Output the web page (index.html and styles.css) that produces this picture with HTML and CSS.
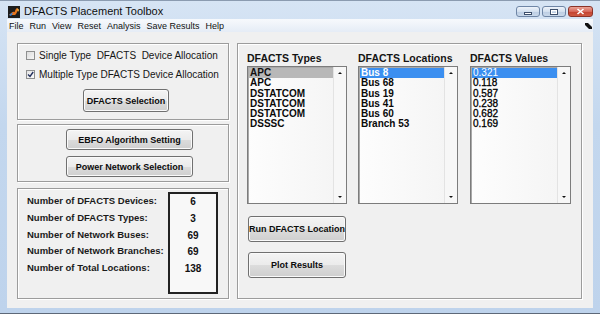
FILE: index.html
```html
<!DOCTYPE html>
<html lang="en">
<head>
    <meta charset="UTF-8">
    <meta name="viewport" content="width=device-width, initial-scale=1.0">
    <title>DFACTS Placement Toolbox</title>
    <link rel="stylesheet" href="styles.css">
</head>
<body>
    <div class="window">
        <div class="titlebar">
            <svg class="app-icon" width="12" height="12" viewBox="0 0 12 12">
                <rect width="12" height="12" fill="#1c1c1c"/>
                <path d="M1 9 C3 8 4 5 6 6 C7 7 7 3 9 2 L11 4 C9 4 9 8 7 9 Z" fill="#e8741c"/>
                <path d="M1 9 C3 8 4 6 5 7 L3 10 Z" fill="#3a7fd0"/>
                <path d="M9 2 L11 4 L10 6 Z" fill="#f4c040"/>
            </svg>
            <span class="title">DFACTS Placement Toolbox</span>
            <div class="win-buttons">
                <span class="wbtn min"><i></i></span>
                <span class="wbtn max"><i></i></span>
                <span class="wbtn close">
                    <svg width="9" height="7" viewBox="0 0 9 7">
                        <path d="M1.5 1 L7.5 6 M7.5 1 L1.5 6" stroke="#fff" stroke-width="1.6"/>
                    </svg>
                </span>
            </div>
        </div>

        <div class="menubar">
            <span>File</span>
            <span>Run</span>
            <span>View</span>
            <span>Reset</span>
            <span>Analysis</span>
            <span>Save Results</span>
            <span>Help</span>
            <svg class="dock" width="7" height="6" viewBox="0 0 7 6">
                <path d="M0 0 L3 0 L7 4 L7 6 L4 6 L0 2 Z" fill="#111"/>
            </svg>
        </div>

        <div class="content">
            <div class="left-col">
                <div class="panel alloc">
                    <label class="check"><span class="box"></span>Single Type&nbsp; DFACTS&nbsp; Device Allocation</label>
                    <label class="check"><span class="box checked">
                        <svg width="7" height="7" viewBox="0 0 7 7"><path d="M1 3.5 L3 5.5 L6.2 1" stroke="#24315e" stroke-width="1.4" fill="none"/></svg>
                    </span>Multiple Type DFACTS Device Allocation</label>
                    <button class="btn btn-select">DFACTS Selection</button>
                </div>

                <div class="panel setup">
                    <button class="btn btn-setup">EBFO Algorithm Setting</button>
                    <button class="btn btn-setup">Power Network Selection</button>
                </div>

                <div class="panel stats">
                    <div class="stat-labels">
                        <div>Number of DFACTS Devices:</div>
                        <div>Number of DFACTS Types:</div>
                        <div>Number of Network Buses:</div>
                        <div>Number of Network Branches:</div>
                        <div>Number of Total Locations:</div>
                    </div>
                    <div class="stat-values">
                        <div>6</div>
                        <div>3</div>
                        <div>69</div>
                        <div>69</div>
                        <div>138</div>
                    </div>
                </div>
            </div>

            <div class="panel main">
                <div class="lists">
                    <div class="list-col">
                        <div class="list-title">DFACTS Types</div>
                        <div class="listbox types">
                            <ul>
                                <li class="sel inactive">APC</li>
                                <li>APC</li>
                                <li>DSTATCOM</li>
                                <li>DSTATCOM</li>
                                <li>DSTATCOM</li>
                                <li>DSSSC</li>
                            </ul>
                            <div class="scroll"><span class="up"></span><span class="down"></span></div>
                        </div>
                    </div>
                    <div class="list-col">
                        <div class="list-title">DFACTS Locations</div>
                        <div class="listbox locations">
                            <ul>
                                <li class="sel">Bus 8</li>
                                <li>Bus 68</li>
                                <li>Bus 19</li>
                                <li>Bus 41</li>
                                <li>Bus 60</li>
                                <li>Branch 53</li>
                            </ul>
                            <div class="scroll"><span class="up"></span><span class="down"></span></div>
                        </div>
                    </div>
                    <div class="list-col">
                        <div class="list-title">DFACTS Values</div>
                        <div class="listbox values">
                            <ul>
                                <li class="sel">0.321</li>
                                <li>0.118</li>
                                <li>0.587</li>
                                <li>0.238</li>
                                <li>0.682</li>
                                <li>0.169</li>
                            </ul>
                            <div class="scroll"><span class="up"></span><span class="down"></span></div>
                        </div>
                    </div>
                </div>

                <div class="actions">
                    <button class="btn btn-action">Run DFACTS Location</button>
                    <button class="btn btn-action">Plot Results</button>
                </div>
            </div>
        </div>
    </div>
</body>
</html>
```

FILE: styles.css
```css
* {
    box-sizing: border-box;
}

body {
    margin: 0;
    font-family: "Liberation Sans", Arial, sans-serif;
    color: #111;
    background: #c6d9f0;
}

.window {
    width: 600px;
    height: 314px;
    display: flex;
    flex-direction: column;
    padding: 0 7px 5px 7px;
    background: linear-gradient(to bottom, #d6e4f4, #c3d7ee 40%, #bed3ec);
    border-top: 1px solid #8b9bb0;
    border-bottom: 1px solid #5d6878;
}

/* title bar */
.titlebar {
    height: 18px;
    display: flex;
    align-items: flex-start;
    padding-top: 4px;
}

.app-icon {
    margin-left: 1px;
    margin-top: 1px;
}

.title {
    margin-left: 4px;
    font-size: 11px;
    line-height: 13px;
    color: #101010;
}

.win-buttons {
    margin-left: auto;
    display: flex;
    gap: 2px;
    margin-top: 1px;
}

.wbtn {
    width: 24px;
    height: 11px;
    border: 1px solid #6f86a6;
    border-radius: 3px;
    background: linear-gradient(to bottom, #eef3fa, #d3e0ef 50%, #bccde3 51%, #c9d8ea);
    display: flex;
    align-items: center;
    justify-content: center;
}

.wbtn.min i {
    width: 8px;
    height: 3px;
    margin-top: 3px;
    background: #fff;
    border: 1px solid #3d4f6b;
}

.wbtn.max i {
    width: 8px;
    height: 6px;
    border: 1px solid #3d4f6b;
    box-shadow: inset 0 0 0 1px #fff;
}

.wbtn.close {
    width: 25px;
    border-color: #8b3328;
    background: linear-gradient(to bottom, #eaa396, #d6685a 50%, #c2402f 51%, #cf5a42);
}

/* menu */
.menubar {
    height: 13px;
    display: flex;
    align-items: center;
    gap: 6px;
    padding-left: 2px;
    background: linear-gradient(to bottom, #f7f9fc, #e5ecf6);
    font-size: 9px;
    color: #111;
}

.menubar .dock {
    margin-left: auto;
    margin-right: 1px;
}

/* content */
.content {
    flex: 1;
    display: flex;
    gap: 8px;
    padding: 11px 11px 9px 10px;
    background: #f0f0f0;
}

.left-col {
    width: 212px;
    display: flex;
    flex-direction: column;
}

.panel {
    border: 1px solid #9c9c9c;
    box-shadow: inset 1px 1px 0 #fff, 1px 1px 0 #fff;
    background: #f0f0f0;
}

.alloc {
    height: 77px;
    padding: 4px 0 0 8px;
}

.setup {
    height: 58px;
    margin-top: 4px;
    padding: 4px 0 0 48px;
}

.stats {
    height: 111px;
    margin-top: 6px;
    display: flex;
    padding-left: 9px;
}

/* checkboxes */
.check {
    display: flex;
    align-items: center;
    height: 14px;
    font-size: 10px;
    color: #151515;
    white-space: nowrap;
}

.check + .check {
    margin-top: 5px;
}

.box {
    width: 9px;
    height: 9px;
    margin-right: 4px;
    border: 1px solid #8e8f8f;
    background: linear-gradient(135deg, #dcdcdc, #f6f6f6);
    display: flex;
    align-items: center;
    justify-content: center;
}

.box.checked {
    background: linear-gradient(135deg, #e4e4e4, #fbfbfb);
}

/* buttons */
.btn {
    display: block;
    padding: 0;
    font-family: "Liberation Sans", Arial, sans-serif;
    font-size: 9px;
    font-weight: bold;
    color: #0c0c0c;
    border: 1px solid #707070;
    border-radius: 3px;
    background: linear-gradient(to bottom, #f4f4f4, #ebebeb 50%, #dcdcdc 51%, #cfcfcf);
    box-shadow: inset 0 0 0 1px #fafafa;
    white-space: nowrap;
}

.btn-select {
    width: 86px;
    height: 23px;
    margin: 8px 0 0 57px;
}

.btn-setup {
    width: 127px;
    height: 21px;
}

.btn-setup + .btn-setup {
    margin-top: 6px;
}

/* stats */
.stat-labels {
    width: 141px;
    padding-top: 4px;
    font-size: 9.5px;
    font-weight: bold;
    line-height: 16.75px;
    color: #1a1a1a;
}

.stat-values {
    width: 50px;
    height: 102px;
    margin-top: 3px;
    border: 2px solid #222;
    background: #f8f8f8;
    text-align: center;
    font-size: 10px;
    font-weight: bold;
    line-height: 16.75px;
}

/* main panel */
.main {
    width: 345px;
    padding: 8px 0 0 9px;
}

.lists {
    display: flex;
    gap: 11px;
}

.list-col {
    width: 100px;
}

.list-col:last-child {
    width: 101px;
    margin-left: 1px;
}

.list-title {
    height: 12px;
    line-height: 12px;
    font-size: 10.5px;
    font-weight: bold;
    color: #141414;
    margin-bottom: 2px;
    white-space: nowrap;
}

.listbox {
    height: 138px;
    display: flex;
    border: 1px solid #7c7c7c;
    box-shadow: inset 1px 1px 0 #a9a9a9;
    background: linear-gradient(to right, #fdfdfd, #f4f4f4);
}

.listbox ul {
    flex: 1;
    list-style: none;
    margin: 0;
    padding: 1px 0 0 1px;
}

.listbox li {
    height: 10.3px;
    line-height: 10.3px;
    padding-left: 1px;
    font-size: 10px;
    font-weight: bold;
    color: #0a0a0a;
    white-space: nowrap;
}

.values li {
    font-weight: normal;
    color: #000;
    -webkit-text-stroke: 0.3px #000;
}

.listbox li.sel {
    background: #3b8ff0;
    color: #fff;
    -webkit-text-stroke: 0;
}

.listbox li.sel.inactive {
    background: #b8b8b8;
    color: #111;
}

.scroll {
    width: 13px;
    position: relative;
    border-left: 1px solid #e3e3e3;
    background: #f7f7f7;
}

.scroll .up,
.scroll .down {
    position: absolute;
    left: 4px;
    width: 0;
    height: 0;
    border-left: 2.5px solid transparent;
    border-right: 2.5px solid transparent;
}

.scroll .up {
    top: 5px;
    border-bottom: 2.5px solid #111;
}

.scroll .down {
    bottom: 5px;
    border-top: 2.5px solid #111;
}

.actions {
    margin: 12px 0 0 1px;
}

.btn-action {
    width: 98px;
    height: 26px;
}

.btn-action + .btn-action {
    margin-top: 10px;
}
```
